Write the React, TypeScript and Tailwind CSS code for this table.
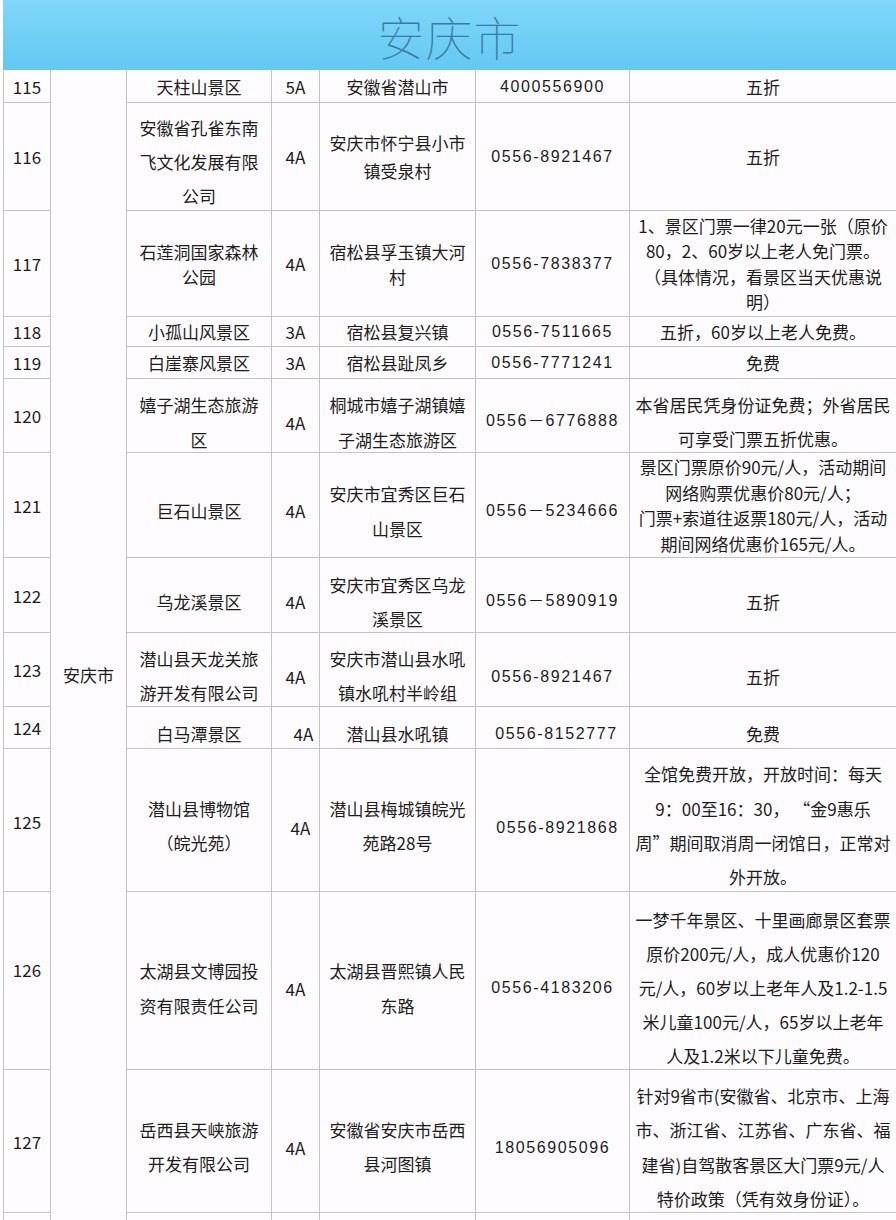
import clsx from 'clsx'

type CellSpec = string | { t: string; lh?: string; c?: string }

type Row = {
  no: CellSpec
  name: CellSpec
  level: CellSpec
  addr: CellSpec
  phone: CellSpec
  note: CellSpec
}

const rows: Row[] = [
  {
    no: '115',
    name: '天柱山景区',
    level: '5A',
    addr: '安徽省潜山市',
    phone: '4000556900',
    note: '五折',
  },
  {
    no: '116',
    name: { t: '安徽省孔雀东南\n飞文化发展有限\n公司', lh: 'leading-[34px]', c: 'pt-[10px]' },
    level: '4A',
    addr: { t: '安庆市怀宁县小市\n镇受泉村', lh: 'leading-[28px]' },
    phone: '0556-8921467',
    note: '五折',
  },
  {
    no: '117',
    name: '石莲洞国家森林\n公园',
    level: '4A',
    addr: '宿松县孚玉镇大河\n村',
    phone: '0556-7838377',
    note: {
      t: '1、景区门票一律20元一张（原价\n80，2、60岁以上老人免门票。\n（具体情况，看景区当天优惠说\n明）',
      lh: 'leading-[25.5px]',
    },
  },
  {
    no: '118',
    name: '小孤山风景区',
    level: '3A',
    addr: '宿松县复兴镇',
    phone: '0556-7511665',
    note: '五折，60岁以上老人免费。',
  },
  {
    no: '119',
    name: '白崖寨风景区',
    level: '3A',
    addr: '宿松县趾凤乡',
    phone: '0556-7771241',
    note: '免费',
  },
  {
    no: '120',
    name: { t: '嬉子湖生态旅游\n区', lh: 'leading-[35px]', c: 'pt-[13px]' },
    level: { t: '4A', c: 'pt-[13px]' },
    addr: { t: '桐城市嬉子湖镇嬉\n子湖生态旅游区', lh: 'leading-[35px]', c: 'pt-[13px]' },
    phone: { t: '0556－6776888', c: 'pt-[9px]' },
    note: { t: '本省居民凭身份证免费；外省居民\n可享受门票五折优惠。', lh: 'leading-[34px]', c: 'pt-[13px]' },
  },
  {
    no: '121',
    name: { t: '巨石山景区', c: 'pt-[11px]' },
    level: { t: '4A', c: 'pt-[11px]' },
    addr: { t: '安庆市宜秀区巨石\n山景区', lh: 'leading-[35px]', c: 'pt-[11px]' },
    phone: { t: '0556－5234666', c: 'pt-[11px]' },
    note: {
      t: '景区门票原价90元/人，活动期间\n网络购票优惠价80元/人；\n门票+索道往返票180元/人，活动\n期间网络优惠价165元/人。',
      lh: 'leading-[25.5px]',
    },
  },
  {
    no: '122',
    name: { t: '乌龙溪景区', c: 'pt-[13px]' },
    level: { t: '4A', c: 'pt-[13px]' },
    addr: { t: '安庆市宜秀区乌龙\n溪景区', lh: 'leading-[34px]', c: 'pt-[13px]' },
    phone: { t: '0556－5890919', c: 'pt-[10px]' },
    note: { t: '五折', c: 'pt-[13px]' },
  },
  {
    no: '123',
    name: { t: '潜山县天龙关旅\n游开发有限公司', lh: 'leading-[34px]', c: 'pt-[13px]' },
    level: { t: '4A', c: 'pt-[13px]' },
    addr: { t: '安庆市潜山县水吼\n镇水吼村半岭组', lh: 'leading-[34px]', c: 'pt-[13px]' },
    phone: { t: '0556-8921467', c: 'pt-[13px]' },
    note: { t: '五折', c: 'pt-[13px]' },
  },
  {
    no: '124',
    name: { t: '白马潭景区', c: 'pt-[12px]' },
    level: { t: '4A', c: 'pt-[12px] pl-[16px]' },
    addr: { t: '潜山县水吼镇', c: 'pt-[12px]' },
    phone: { t: '0556-8152777', c: 'pt-[12px] pl-[8px]' },
    note: { t: '免费', c: 'pt-[12px]' },
  },
  {
    no: { t: '125', c: 'pt-[2px]' },
    name: { t: '潜山县博物馆\n（皖光苑）', lh: 'leading-[34px]', c: 'pt-[12px]' },
    level: { t: '4A', c: 'pt-[14px] pl-[10px]' },
    addr: { t: '潜山县梅城镇皖光\n苑路28号', lh: 'leading-[34px]', c: 'pt-[12px]' },
    phone: { t: '0556-8921868', c: 'pt-[14px] pl-[10px]' },
    note: {
      t: '全馆免费开放，开放时间：每天\n9：00至16：30， “金9惠乐\n周”期间取消周一闭馆日，正常对\n外开放。',
      lh: 'leading-[34.3px]',
      c: 'pt-[12px]',
    },
  },
  {
    no: { t: '126', c: 'pb-[22px]' },
    name: { t: '太湖县文博园投\n资有限责任公司', lh: 'leading-[35px]', c: 'pt-[14px]' },
    level: { t: '4A', c: 'pt-[15px]' },
    addr: { t: '太湖县晋熙镇人民\n东路', lh: 'leading-[35px]', c: 'pt-[14px]' },
    phone: { t: '0556-4183206', c: 'pt-[13px]' },
    note: {
      t: '一梦千年景区、十里画廊景区套票\n原价200元/人，成人优惠价120\n元/人，60岁以上老年人及1.2-1.5\n米儿童100元/人，65岁以上老年\n人及1.2米以下儿童免费。',
      lh: 'leading-[34px]',
      c: 'pt-[15px]',
    },
  },
  {
    no: '127',
    name: { t: '岳西县天峡旅游\n开发有限公司', lh: 'leading-[34px]', c: 'pt-[12px]' },
    level: { t: '4A', c: 'pt-[12px]' },
    addr: { t: '安徽省安庆市岳西\n县河图镇', lh: 'leading-[34px]', c: 'pt-[12px]' },
    phone: { t: '18056905096', c: 'pt-[12px]' },
    note: {
      t: '针对9省市(安徽省、北京市、上海\n市、浙江省、江苏省、广东省、福\n建省)自驾散客景区大门票9元/人\n特价政策（凭有效身份证）。',
      lh: 'leading-[34.3px]',
      c: 'pt-[13px]',
    },
  },
  { no: '', name: '', level: '', addr: '', phone: '', note: '' },
]

const cjk = "font-['Noto_Sans_CJK_SC',sans-serif] text-[17px]"
const mono = "font-['Liberation_Sans','Noto_Sans_CJK_SC',sans-serif] text-[16px] tracking-[1.6px]"

function Cell({ spec, phone = false }: { spec: CellSpec; phone?: boolean }) {
  const s = typeof spec === 'string' ? { t: spec } : spec
  return (
    <div
      className={clsx(
        'flex items-center justify-center bg-[#fefcfe] text-center text-[#1d1d1d]',
        phone ? mono : cjk,
        s.lh ?? 'leading-[25px]',
        s.c,
      )}
    >
      <div>
        {s.t.split('\n').map((line, i) => (
          <div key={i} className="whitespace-nowrap">
            {line}
          </div>
        ))}
      </div>
    </div>
  )
}

export default function App() {
  return (
    <div className="h-[1220px] overflow-hidden bg-white pl-[3px]">
      <div className="flex h-[70px] items-center justify-center bg-gradient-to-b from-[#7fd7fa] to-[#64c8f1]">
        <h1 className="font-['Noto_Sans_CJK_SC',sans-serif] text-[47px] font-thin leading-none tracking-[1px] text-[#3b7aa2]">
          安庆市
        </h1>
      </div>

      <div className="grid grid-cols-[46px_75px_144px_47px_155px_153px_1fr] grid-rows-[32px_107px_105px_29px_31px_73px_104px_74px_73px_41px_142px_177px_142px_66px] gap-x-px gap-y-px bg-[#c4c2c4] pl-px">
        <div className={clsx('col-start-2 row-span-14 row-start-1 flex items-center justify-center bg-[#fefcfe] text-[#1d1d1d]', cjk)}>
          安庆市
        </div>
        {rows.map((r, i) => (
          <div key={i} className="contents">
            <Cell spec={r.no} />
            <Cell spec={r.name} />
            <Cell spec={r.level} />
            <Cell spec={r.addr} />
            <Cell spec={r.phone} phone />
            <Cell spec={r.note} />
          </div>
        ))}
      </div>
    </div>
  )
}
